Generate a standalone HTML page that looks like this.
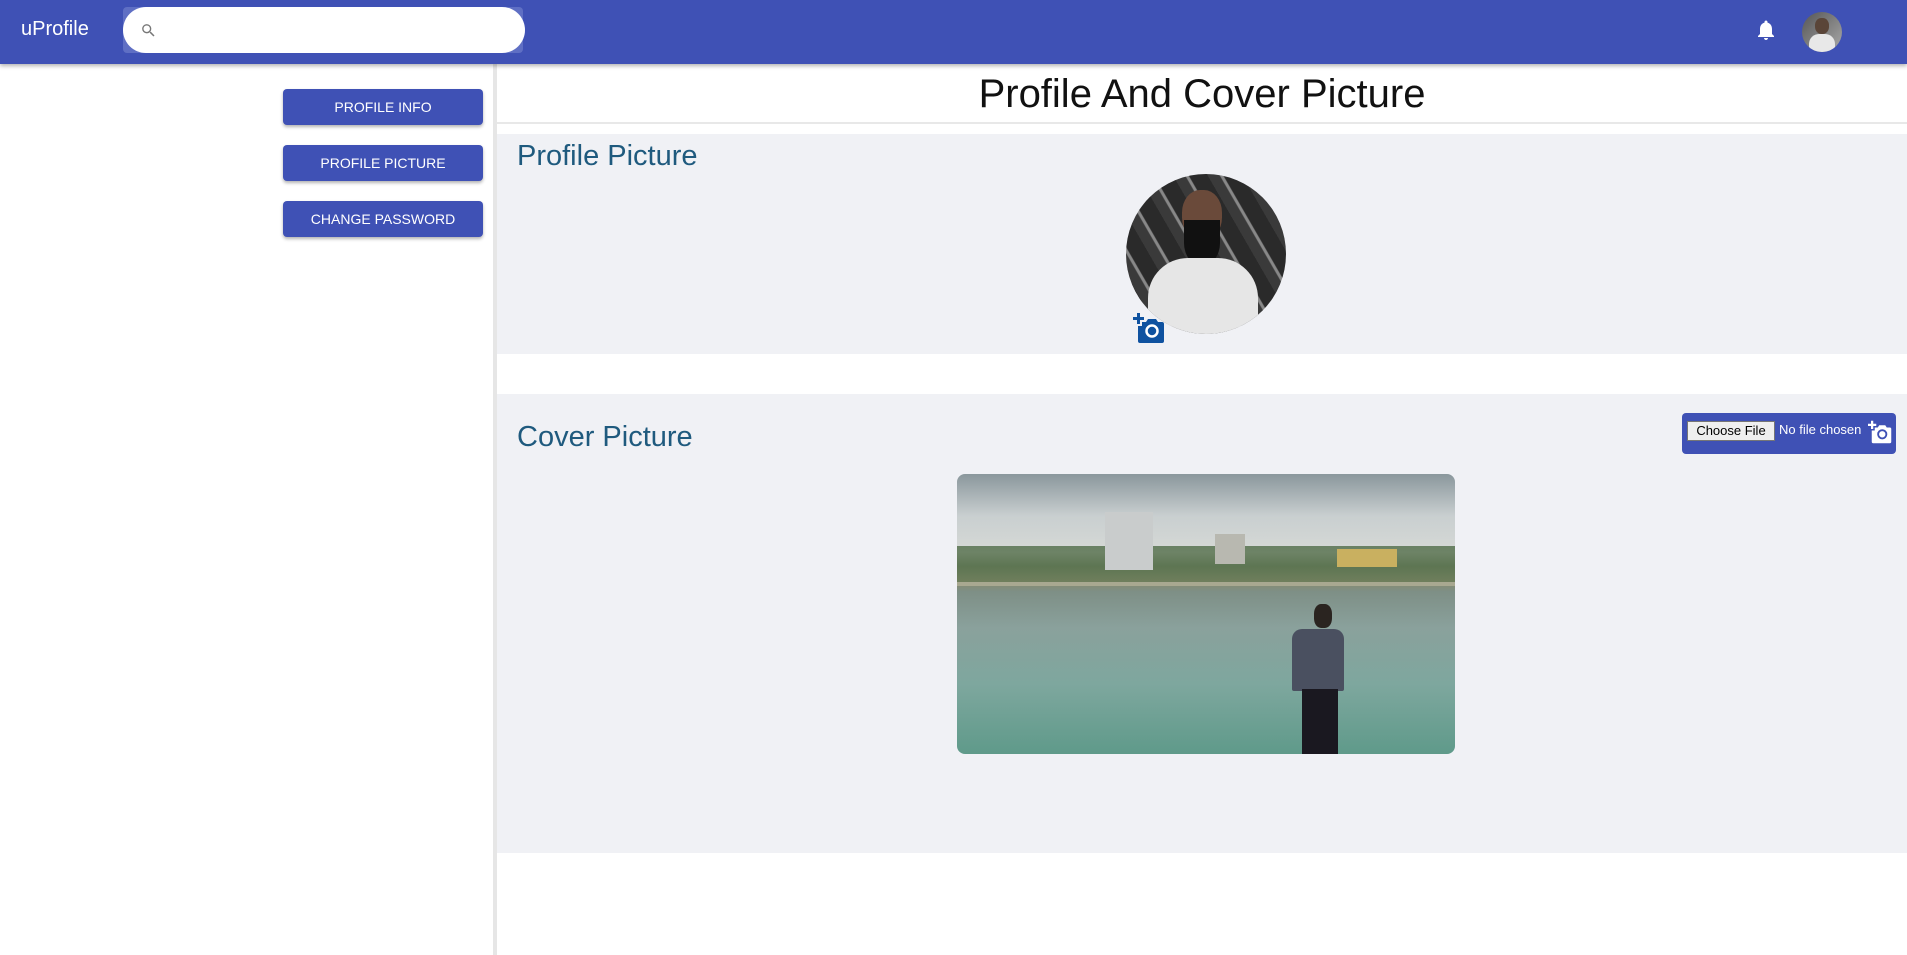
<!DOCTYPE html>
<html><head><meta charset="utf-8">
<style>
*{box-sizing:border-box;margin:0;padding:0}
body{width:1907px;height:955px;overflow:hidden;background:#fff;font-family:"Liberation Sans",sans-serif;position:relative}
.hdr{position:absolute;left:0;top:0;width:1907px;height:64px;background:#3f51b5;box-shadow:0 2px 4px rgba(0,0,0,.3);z-index:2}
.logo{position:absolute;left:21px;top:18px;color:#fff;font-size:20px}
.sbg{position:absolute;left:123px;top:7px;width:400px;height:46px;background:#5f6fc4;border-radius:4px}
.search{position:absolute;left:123px;top:7px;width:402px;height:46px;background:#fff;border-radius:23px}
.btn{position:absolute;left:283px;width:200px;height:36px;background:#3f51b5;color:#fff;border-radius:4px;font-size:14px;text-align:center;line-height:37px;box-shadow:0 2px 3px rgba(0,0,0,.3)}
.div{position:absolute;left:493px;top:64px;width:4px;height:891px;background:#e6e6e6}
.title{position:absolute;left:497px;width:1410px;top:72px;text-align:center;font-size:40px;color:#111}
.line{position:absolute;left:497px;top:122px;width:1410px;height:2px;background:#e8e8e8}
.sec{position:absolute;left:497px;width:1410px;background:#f0f1f5}
.h2{position:absolute;left:517px;font-size:29px;color:#1f5a7e}
</style></head><body>
<div class="hdr">
<div class="logo">uProfile</div>
<div class="sbg"></div><div class="search">
<svg style="position:absolute;left:17px;top:15px" width="17" height="17" viewBox="0 0 24 24"><path fill="#777" d="M15.5 14h-.79l-.28-.27A6.470 6.470 0 0 0 16 9.5 6.5 6.5 0 1 0 9.5 16c1.61 0 3.090-.59 4.23-1.57l.27.28v.79l5 4.99L20.49 19l-4.99-5zm-6 0C7.01 14 5 11.99 5 9.5S7.01 5 9.5 5 14 7.01 14 9.5 11.99 14 9.5 14z"/></svg></div>
<svg style="position:absolute;left:1754px;top:18px" width="24" height="24" viewBox="0 0 24 24"><path fill="#fff" d="M12 22c1.1 0 2-.9 2-2h-4c0 1.1.9 2 2 2zm6-6v-5c0-3.07-1.63-5.64-4.5-6.32V4c0-.83-.67-1.5-1.5-1.5s-1.5.67-1.5 1.5v.68C7.64 5.36 6 7.92 6 11v5l-2 2v1h16v-1l-2-2z"/></svg>
<div style="position:absolute;left:1802px;top:12px;width:40px;height:40px;border-radius:50%;background:linear-gradient(135deg,#555,#aaa);overflow:hidden"><div style="position:absolute;left:13px;top:6px;width:14px;height:16px;border-radius:45%;background:#5a4538"></div><div style="position:absolute;left:7px;top:22px;width:26px;height:20px;background:#e8e8e8;border-radius:10px 10px 0 0"></div></div>
</div>
<div class="btn" style="top:89px">PROFILE INFO</div>
<div class="btn" style="top:145px">PROFILE PICTURE</div>
<div class="btn" style="top:201px">CHANGE PASSWORD</div>
<div class="div"></div>
<div class="title">Profile And Cover Picture</div>
<div class="line"></div>
<div class="sec" style="top:134px;height:220px"></div>
<div class="h2" style="top:140px">Profile Picture</div>
<div style="position:absolute;left:1126px;top:174px;width:160px;height:160px;border-radius:50%;overflow:hidden;background:repeating-linear-gradient(60deg,#3a3a3a 0 10px,#888 11px 13px,#2a2a2a 14px 30px)">
<div style="position:absolute;left:56px;top:16px;width:40px;height:50px;border-radius:45%;background:#6a4a3a"></div>
<div style="position:absolute;left:58px;top:46px;width:36px;height:46px;border-radius:0 0 50% 50%;background:#111"></div>
<div style="position:absolute;left:22px;top:84px;width:110px;height:90px;border-radius:40px 40px 0 0;background:#e6e6e6"></div>
</div>
<svg style="position:absolute;left:1133px;top:313px" width="32" height="30" viewBox="0 0 32 30"><path fill="#0f52a0" d="M4 0h3v4h4v3H7v4H4V7H0V4h4z"/><path fill="#0f52a0" d="M9 9h4l2-3h8l2 3h4a2 2 0 0 1 2 2v17a2 2 0 0 1-2 2H7a2 2 0 0 1-2-2V13h4z"/><circle cx="19" cy="18" r="5.5" fill="none" stroke="#fff" stroke-width="2.5"/></svg>
<div class="sec" style="top:394px;height:459px"></div>
<div class="h2" style="top:421px">Cover Picture</div>
<div style="position:absolute;left:1682px;top:413px;width:214px;height:41px;background:#3f51b5;border-radius:4px">
<div style="position:absolute;left:5px;top:8px;width:88px;height:20px;background:#efefef;border:1px solid #767676;font-size:13px;line-height:18px;text-align:center;color:#000">Choose File</div>
<div style="position:absolute;left:97px;top:9px;color:#fff;font-size:13px">No file chosen</div>
<svg style="position:absolute;left:186px;top:7px" width="24" height="24" viewBox="0 0 32 30"><path fill="#fff" d="M4 0h3v4h4v3H7v4H4V7H0V4h4z"/><path fill="#fff" d="M9 9h4l2-3h8l2 3h4a2 2 0 0 1 2 2v17a2 2 0 0 1-2 2H7a2 2 0 0 1-2-2V13h4z"/><circle cx="19" cy="18" r="5.5" fill="none" stroke="#3f51b5" stroke-width="2.5"/></svg>
</div>
<div style="position:absolute;left:957px;top:474px;width:498px;height:280px;border-radius:8px;overflow:hidden;background:linear-gradient(#8a979c 0%,#c9cfd0 15%,#d6d9d6 28%,#5f7a5a 33%,#8a8a6a 38%,#7e8f86 42%,#8aa19c 55%,#7ea79e 75%,#5f9a8a 100%)">
<div style="position:absolute;left:0;top:72px;width:498px;height:40px;background:linear-gradient(#4f6b47,#6a7d5a);opacity:.8"></div>
<div style="position:absolute;left:148px;top:38px;width:48px;height:58px;background:#c9cccc"></div>
<div style="position:absolute;left:258px;top:60px;width:30px;height:30px;background:#b8b8b0"></div>
<div style="position:absolute;left:380px;top:75px;width:60px;height:18px;background:#c9b060"></div>
<div style="position:absolute;left:0;top:108px;width:498px;height:4px;background:#a8a890"></div>
<div style="position:absolute;left:357px;top:130px;width:18px;height:24px;border-radius:40%;background:#2a2420"></div>
<div style="position:absolute;left:335px;top:155px;width:52px;height:62px;background:#4a5060;border-radius:10px 10px 2px 2px"></div>
<div style="position:absolute;left:345px;top:215px;width:36px;height:65px;background:#1a1820"></div>
</div>
</body></html>
